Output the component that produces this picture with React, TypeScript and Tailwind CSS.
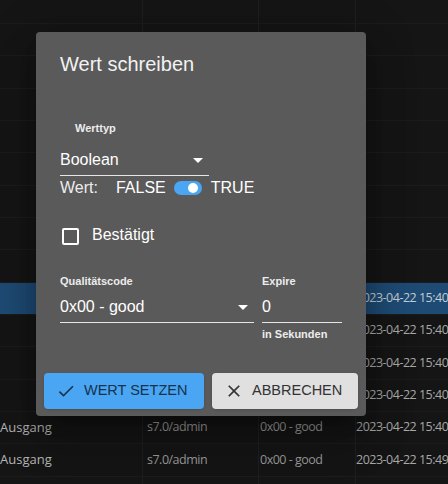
import React from "react";

type Row = { sel?: boolean; a?: string; b?: string; c?: string; d?: string };

const rows: Row[] = [
  {}, {}, {}, {}, {}, {}, {}, {},
  { sel: true, d: "2023-04-22 15:40" },
  { d: "2023-04-22 15:40" },
  { d: "2023-04-22 15:40" },
  { d: "2023-04-22 15:40" },
  { a: "Ausgang", b: "s7.0/admin", c: "0x00 - good", d: "2023-04-22 15:40" },
  { a: "Ausgang", b: "s7.0/admin", c: "0x00 - good", d: "2023-04-22 15:49" },
  {},
];

function ArrowDrop() {
  return (
    <svg viewBox="0 0 24 24" className="w-6 h-6 -mr-px fill-white shrink-0">
      <path d="M7 10l5 5 5-5z" />
    </svg>
  );
}

function Table() {
  return (
    <div className="flex flex-col font-['Open_Sans',sans-serif] text-[12.5px] tracking-[-0.5px] text-[#a8a8a8]">
      <div className="h-[24px] flex border-b border-[#1c1c1c]">
        <div className="w-[143px] border-r border-[#1f1f1f]" />
        <div className="w-[116px] border-r border-[#1f1f1f]" />
        <div className="w-[97px] border-r border-[#1f1f1f]" />
        <div className="flex-1" />
      </div>
      {rows.map((r, i) => (
        <div
          key={i}
          className={
            "h-[32.33px] shrink-0 flex items-center border-b border-[#1c1c1c] " +
            (r.sel ? "bg-[#1e4b74] text-[#c3cbd3]" : "")
          }
        >
          <div className="w-[143px] h-full flex items-center border-r border-[#1f1f1f] text-[13px] tracking-normal text-[#b5b5b5]">
            {r.a}
          </div>
          <div className="w-[116px] h-full flex items-center border-r border-[#1f1f1f] pl-[4px] text-[#9a9a9a]">
            {r.b}
          </div>
          <div className="w-[97px] h-full flex items-center border-r border-[#1f1f1f] pl-[1px] text-[#9a9a9a]">
            {r.c}
          </div>
          <div className="flex-1 h-full flex items-center whitespace-nowrap overflow-hidden">{r.d}</div>
        </div>
      ))}
    </div>
  );
}

function Dialog() {
  return (
    <div className="absolute left-[36px] top-[32px] w-[330px] h-[384px] rounded bg-[#5a5a5a] text-white font-['Liberation_Sans',Arial,sans-serif] flex flex-col shadow-[0_11px_15px_-7px_rgba(0,0,0,0.3),0_24px_38px_3px_rgba(0,0,0,0.2),0_9px_46px_8px_rgba(0,0,0,0.15)]">
      <div className="px-6 pt-4 flex flex-col">
        <h2 className="h-8 leading-8 text-[20px] text-[#f2f2f2]">Wert schreiben</h2>

        <div className="mt-10 pl-[15px] h-4 leading-4 text-[11px] font-bold text-[#ececec]">Werttyp</div>
        <div className="mt-3 w-[149px] h-[28px] border-b border-[#e6e6e6] flex items-start justify-between">
          <span className="h-6 leading-6 text-[16px]">Boolean</span>
          <ArrowDrop />
        </div>

        <div className="h-6 leading-6 text-[16px] flex items-center">
          <span className="text-[#ededed]">Wert:</span>
          <span className="ml-[18px]">FALSE</span>
          <span className="ml-2 w-[28px] h-[14px] rounded-full bg-[#4aa6f2] flex items-center justify-end pr-[4px]">
            <span className="w-[10px] h-[10px] rounded-full bg-white" />
          </span>
          <span className="ml-[9px]">TRUE</span>
        </div>

        <div className="mt-[23px] h-6 flex items-start">
          <span className="ml-[2px] mt-[5px] w-[17px] h-[17px] border-2 border-white rounded-[2px]" />
          <span className="ml-[13px] leading-6 text-[16px]">Bestätigt</span>
        </div>

        <div className="mt-[26px] flex gap-2">
          <div className="w-[194px] flex flex-col">
            <div className="h-4 leading-4 text-[11px] font-bold text-[#ececec]">Qualitätscode</div>
            <div className="mt-[6px] h-[28px] border-b border-[#e6e6e6] flex items-start justify-between">
              <span className="h-6 leading-6 text-[16px]">0x00 - good</span>
              <ArrowDrop />
            </div>
          </div>
          <div className="w-[80px] flex flex-col">
            <div className="h-4 leading-4 text-[11px] font-bold text-[#ececec]">Expire</div>
            <div className="mt-[6px] h-[28px] border-b border-[#e6e6e6]">
              <span className="h-6 leading-6 text-[16px]">0</span>
            </div>
            <div className="mt-[3px] h-4 leading-4 text-[11px] font-bold text-[#ececec]">in Sekunden</div>
          </div>
        </div>
      </div>

      <div className="mt-auto px-2 pb-[7px] flex gap-2">
        <button className="w-[160px] h-9 rounded bg-[#4aa6f2] text-[#16324c] flex items-center pl-3 gap-2 text-[14.5px] uppercase shadow-sm">
          <svg viewBox="0 0 24 24" className="w-5 h-5 fill-[#16324c]">
            <path d="M9 16.17 4.83 12l-1.42 1.41L9 19 21 7l-1.41-1.41z" />
          </svg>
          Wert setzen
        </button>
        <button className="w-[146px] h-9 rounded bg-[#e0e0e0] text-[#333333] flex items-center pl-3 gap-2 text-[14.5px] uppercase shadow-sm">
          <svg viewBox="0 0 24 24" className="w-5 h-5 fill-[#333333]">
            <path d="M19 6.41 17.59 5 12 10.59 6.41 5 5 6.41 10.59 12 5 17.59 6.41 19 12 13.41 17.59 19 19 17.59 13.41 12z" />
          </svg>
          Abbrechen
        </button>
      </div>
    </div>
  );
}

export default function App() {
  return (
    <div className="relative w-[448px] h-[484px] overflow-hidden bg-[#151515]">
      <Table />
      <Dialog />
    </div>
  );
}
